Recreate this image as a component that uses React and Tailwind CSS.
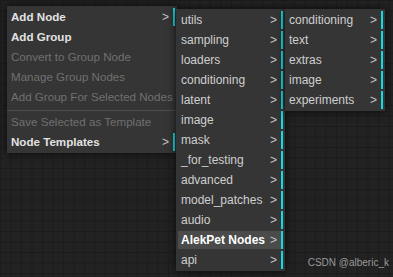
const mainItems = [
  { label: "Add Node", bold: true, submenu: true },
  { label: "Add Group", bold: true },
  { label: "Convert to Group Node", disabled: true },
  { label: "Manage Group Nodes", disabled: true },
  { label: "Add Group For Selected Nodes", disabled: true },
  { separator: true },
  { label: "Save Selected as Template", disabled: true },
  { label: "Node Templates", bold: true, submenu: true },
];

const nodeItems = [
  "utils",
  "sampling",
  "loaders",
  "conditioning",
  "latent",
  "image",
  "mask",
  "_for_testing",
  "advanced",
  "model_patches",
  "audio",
  "AlekPet Nodes",
  "api",
];

const alekItems = ["conditioning", "text", "extras", "image", "experiments"];

const Entry = ({ label, bold, disabled, submenu, active, pad }) => (
  <div
    className={`relative flex items-center h-[18px] mx-[2px] ${pad} whitespace-nowrap leading-none ${
      submenu ? "border-r-2 border-[#12dae2]" : ""
    } ${active ? "bg-[#4b4b4b] font-bold text-white" : ""} ${
      bold ? "font-bold text-[#e2e2e2]" : ""
    } ${disabled ? "text-[#707070]" : ""} ${
      !bold && !disabled && !active ? "text-[#cfcfcf]" : ""
    }`}
  >
    {label}
    {submenu && (
      <span className="absolute right-[4px] top-[3px] font-normal text-[12px] text-[#c4c4c4]">
        &gt;
      </span>
    )}
  </div>
);

export default function App() {
  return (
    <div
      className="relative w-[393px] h-[277px] overflow-hidden bg-[#222222] bg-[linear-gradient(to_right,#1c1c1c_1px,transparent_1px),linear-gradient(to_bottom,#1c1c1c_1px,transparent_1px)] bg-[size:10.5px_10.5px] text-[12px]"
      style={{ fontFamily: '"Liberation Sans", Arial, sans-serif' }}
    >
      {/* main context menu */}
      <div className="absolute left-[7px] top-[6px] w-[170px] flex flex-col gap-[2px] py-[2px] bg-[#353535] text-[11.6px] shadow-[0_0_8px_rgba(0,0,0,0.75)]">
        {mainItems.map((item, i) =>
          item.separator ? (
            <div key={i} className="h-px mt-[2px] bg-[#4d4d4d]" />
          ) : (
            <Entry key={i} {...item} pad="pl-[2px]" />
          )
        )}
      </div>

      {/* Add Node submenu */}
      <div className="absolute left-[176px] top-[9px] w-[109px] flex flex-col gap-[2px] py-[2px] bg-[#353535] shadow-[0_0_8px_rgba(0,0,0,0.75)]">
        {nodeItems.map((label) => (
          <Entry
            key={label}
            label={label}
            submenu
            active={label === "AlekPet Nodes"}
            pad="pl-[3px]"
          />
        ))}
      </div>

      {/* AlekPet Nodes submenu */}
      <div className="absolute left-[285px] top-[9px] w-[100px] flex flex-col gap-[2px] py-[2px] bg-[#353535] shadow-[0_0_8px_rgba(0,0,0,0.75)]">
        {alekItems.map((label) => (
          <Entry key={label} label={label} submenu pad="pl-[2px]" />
        ))}
      </div>

      <div className="absolute right-[4px] bottom-[7px] text-[10px] text-[#9a9a9a]">
        CSDN @alberic_k
      </div>
    </div>
  );
}
